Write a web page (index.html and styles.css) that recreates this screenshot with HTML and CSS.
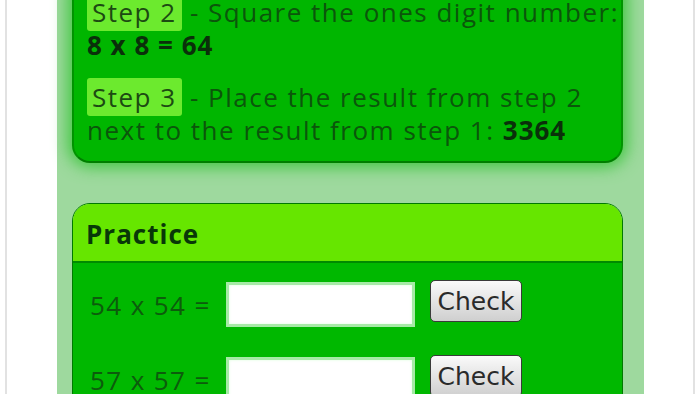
FILE: index.html
```html
<!DOCTYPE html>
<html lang="en">
<head>
    <meta charset="UTF-8">
    <meta name="viewport" content="width=device-width, initial-scale=1.0">
    <title>Squaring Numbers Ending in 8</title>
    <link rel="stylesheet" href="styles.css">
</head>
<body>
    <div class="frame">
        <div class="panel">
            <!-- Steps -->
            <div class="card steps">
                <p><span class="step">Step 2</span> - Square the ones digit number:<br><b>8 x 8 = 64</b></p>
                <p><span class="step">Step 3</span> - Place the result from step 2<br>next to the result from step 1: <b>3364</b></p>
            </div>

            <!-- Practice -->
            <div class="card practice">
                <div class="card-head">Practice</div>
                <div class="card-body">
                    <div class="row">
                        <label>54 x 54 =</label>
                        <input type="text" class="answer">
                        <button class="check">Check</button>
                    </div>
                    <div class="row">
                        <label>57 x 57 =</label>
                        <input type="text" class="answer">
                        <button class="check">Check</button>
                    </div>
                </div>
            </div>
        </div>
    </div>
</body>
</html>
```

FILE: styles.css
```css
body, html {
    margin: 0;
    padding: 0;
    height: 100%;
    overflow: hidden;
    background: #fff;
    font-family: 'Open Sans', sans-serif;
}
.frame {
    margin: 0 5px;
    height: 100%;
    border-left: 2px solid #e2e2e2;
    border-right: 2px solid #e2e2e2;
}
.panel {
    display: flow-root;
    margin: 0 49px 0 50px;
    height: 100%;
    background: #9ed99e;
    padding: 0 21px 0 15px;
}
.card {
    border-radius: 18px;
}
.steps {
    margin-top: -24px;
    padding: 18px 10px 14px 13px;
    background: #00b600;
    border: 2px solid #009400;
    border-bottom-color: #007e00;
    box-shadow: 0 0 16px 4px #3fc63f;
    color: #0b560b;
    font-size: 26px;
    line-height: 33px;
    letter-spacing: 1.5px;
    white-space: nowrap;
}
.steps p {
    margin: 0;
}
.steps p + p {
    margin-top: 19px;
}
.steps b {
    color: #0a300a;
    letter-spacing: 1px;
}
.step {
    background: #6cea2e;
    border-radius: 3px;
    padding: 1px 5px;
    color: #1c4a12;
}
.practice {
    margin-top: 40px;
    border: 1px solid #007a00;
    overflow: hidden;
}
.card-head {
    background: #66e600;
    height: 57px;
    line-height: 60px;
    padding-left: 13px;
    font-size: 26px;
    font-weight: bold;
    color: #083808;
    border-bottom: 2px solid #008a00;
    letter-spacing: 1px;
}
.card-body {
    background: #00b800;
    padding: 19px 0 20px 17px;
    height: 300px;
}
.row {
    display: flex;
    align-items: center;
    height: 45px;
    margin-bottom: 30px;
}
.row label {
    width: 136px;
    font-size: 26px;
    color: #0c5c0c;
    letter-spacing: 1.4px;
    white-space: nowrap;
}
.answer {
    width: 183px;
    height: 39px;
    margin: 0;
    padding: 0;
    border: 3px solid #a6eaa6;
    background: #fff;
    box-shadow: inset 0 0 3px #dfd;
}
.check {
    margin: 0 0 0 15px;
    align-self: flex-start;
    margin-top: -2px;
    width: 92px;
    height: 42px;
    padding: 0;
    font-family: 'DejaVu Sans', sans-serif;
    font-size: 25px;
    color: #2a2a2a;
    background: linear-gradient(#fafafa, #cfcfcf);
    border: 1px solid #3a3a3a;
    border-radius: 5px;
}
```
